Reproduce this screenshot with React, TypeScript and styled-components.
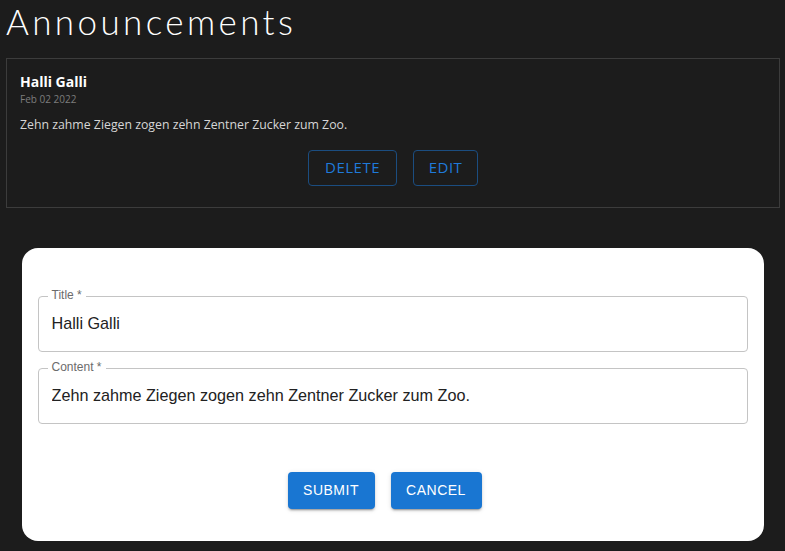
import styled, { createGlobalStyle } from 'styled-components';

const GlobalStyle = createGlobalStyle`
  html, body {
    margin: 0;
    padding: 0;
    background: #1c1c1c;
  }
  body {
    width: 785px;
    height: 551px;
    overflow: hidden;
  }
`;

const Page = styled.div`
  display: flex;
  flex-direction: column;
  height: 551px;
`;

const Top = styled.div`
  padding: 0 5px 0 6px;
`;

const Heading = styled.h1`
  margin: 0;
  height: 58px;
  font-family: Lato, 'Open Sans', sans-serif;
  font-weight: 300;
  font-size: 35px;
  line-height: 42px;
  letter-spacing: 3.4px;
  color: #ffffff;
`;

const Card = styled.div`
  display: flex;
  flex-direction: column;
  border: 1px solid #3c3c3c;
  padding: 13px 13px 21px;
  height: 150px;
  box-sizing: border-box;
  font-family: 'Open Sans', 'Noto Sans', sans-serif;
`;

const CardTitle = styled.div`
  font-weight: 700;
  font-size: 14px;
  line-height: 20px;
  color: #ffffff;
`;

const CardDate = styled.div`
  font-size: 10px;
  line-height: 14px;
  color: #7d7d7d;
`;

const CardText = styled.div`
  font-size: 12.3px;
  line-height: 16px;
  color: #d6d6d6;
  margin-top: 11px;
`;

const Actions = styled.div<{ $gap: number; $top: number; $shift?: number }>`
  display: flex;
  justify-content: center;
  gap: ${(p) => p.$gap}px;
  margin-top: ${(p) => p.$top}px;
  padding-right: ${(p) => p.$shift ?? 0}px;
`;

const OutlineButton = styled.button<{ $w: number }>`
  width: ${(p) => p.$w}px;
  height: 36px;
  border: 1px solid #1b4d80;
  border-radius: 4px;
  background: transparent;
  color: #1f7ada;
  font-family: 'Open Sans', 'Noto Sans', sans-serif;
  font-size: 15px;
  line-height: 30px;
  letter-spacing: 0.5px;
  text-transform: uppercase;
  padding: 0 0 2px;
  cursor: pointer;
`;

const Backdrop = styled.div`
  flex: 1;
  display: flex;
  justify-content: center;
  padding-top: 40px;
`;

const Dialog = styled.div`
  width: 742px;
  height: 293px;
  background: #ffffff;
  border-radius: 16px;
  box-sizing: border-box;
  padding: 48px 16px 0;
  display: flex;
  flex-direction: column;
  gap: 16px;
`;

const Field = styled.div`
  position: relative;
  height: 56px;
  box-sizing: border-box;
  border: 1px solid #c4c4c4;
  border-radius: 4px;
  padding: 0 13px;
  display: flex;
  align-items: center;
`;

const Label = styled.span`
  position: absolute;
  top: -9px;
  left: 9px;
  padding: 0 4px;
  background: #ffffff;
  font-family: 'Liberation Sans', Arial, sans-serif;
  font-size: 12px;
  line-height: 14px;
  color: #6b6b6b;
`;

const Input = styled.input`
  border: none;
  outline: none;
  width: 100%;
  padding: 0 0 2px;
  background: transparent;
  font-family: 'Liberation Sans', Arial, sans-serif;
  font-size: 16.2px;
  color: #222222;
`;

const SolidButton = styled.button<{ $w: number }>`
  width: ${(p) => p.$w}px;
  height: 37px;
  border: none;
  border-radius: 4px;
  background: #1976d2;
  color: #ffffff;
  font-family: 'Liberation Sans', Arial, sans-serif;
  font-weight: 400;
  font-size: 14px;
  letter-spacing: 0.5px;
  text-transform: uppercase;
  padding: 0 0 2px;
  box-shadow: 0 3px 1px -2px rgba(0, 0, 0, 0.2), 0 2px 2px 0 rgba(0, 0, 0, 0.14),
    0 1px 5px 0 rgba(0, 0, 0, 0.12);
  cursor: pointer;
`;

export default function App() {
  return (
    <>
      <GlobalStyle />
      <Page>
        <Top>
          <Heading>Announcements</Heading>
          <Card>
            <CardTitle>Halli Galli</CardTitle>
            <CardDate>Feb 02 2022</CardDate>
            <CardText>Zehn zahme Ziegen zogen zehn Zentner Zucker zum Zoo.</CardText>
            <Actions $gap={16} $top={17}>
              <OutlineButton $w={89}>Delete</OutlineButton>
              <OutlineButton $w={65}>Edit</OutlineButton>
            </Actions>
          </Card>
        </Top>
        <Backdrop>
          <Dialog>
            <Field>
              <Label>Title *</Label>
              <Input defaultValue="Halli Galli" />
            </Field>
            <Field>
              <Label>Content *</Label>
              <Input defaultValue="Zehn zahme Ziegen zogen zehn Zentner Zucker zum Zoo." />
            </Field>
            <Actions $gap={16} $top={32} $shift={16}>
              <SolidButton $w={87}>Submit</SolidButton>
              <SolidButton $w={91}>Cancel</SolidButton>
            </Actions>
          </Dialog>
        </Backdrop>
      </Page>
    </>
  );
}
